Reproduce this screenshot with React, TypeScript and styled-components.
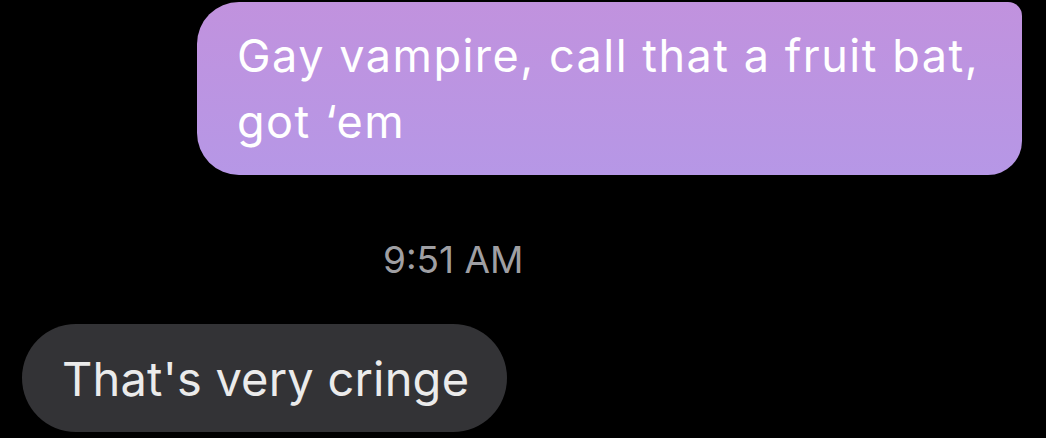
import React from "react";
import styled, { createGlobalStyle } from "styled-components";

const Global = createGlobalStyle`
  html, body { margin: 0; padding: 0; background: #000; }
  body { width: 1046px; height: 438px; overflow: hidden; font-family: Inter, Roboto, "Liberation Sans", sans-serif; }
`;

const Thread = styled.div`
  display: flex;
  flex-direction: column;
  width: 1046px;
  height: 438px;
  background: #000;
  box-sizing: border-box;
  padding-top: 2px;
`;

const SentRow = styled.div`
  display: flex;
  justify-content: flex-end;
  padding-right: 24px;
`;

const SentBubble = styled.div`
  width: 825px;
  height: 173px;
  box-sizing: border-box;
  padding: 21px 20px 0 40px;
  border-radius: 42px 14px 34px 42px;
  background: linear-gradient(180deg, #c192de 0%, #b697e6 100%);
  color: #fff;
  font-size: 45px;
  line-height: 66px;
  letter-spacing: 1.5px;
`;

const Stamp = styled.div`
  margin-top: 63px;
  padding-left: 383px;
  color: #9f9fa3;
  font-size: 37px;
  line-height: 44px;
`;

const RecvRow = styled.div`
  display: flex;
  margin-top: 42px;
  padding-left: 22px;
`;

const RecvBubble = styled.div`
  height: 108px;
  box-sizing: border-box;
  padding: 0 38px 0 40px;
  display: flex;
  align-items: center;
  border-radius: 54px;
  background: #333336;
  color: #ebebeb;
  font-size: 47px;
  letter-spacing: 0.2px;
`;

export default function App() {
  return (
    <>
      <Global />
      <Thread>
        <SentRow>
          <SentBubble>Gay vampire, call that a fruit bat, got ‘em</SentBubble>
        </SentRow>
        <Stamp>9:51 AM</Stamp>
        <RecvRow>
          <RecvBubble>That's very cringe</RecvBubble>
        </RecvRow>
      </Thread>
    </>
  );
}
